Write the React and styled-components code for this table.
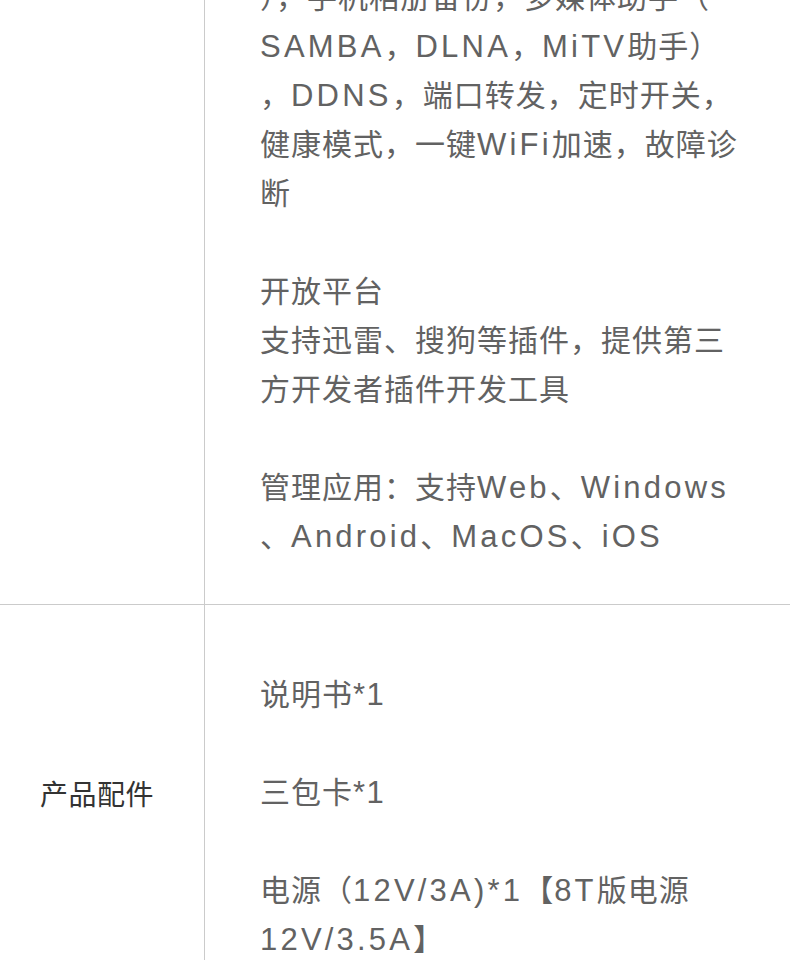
import React from "react";
import styled, { createGlobalStyle } from "styled-components";

const GlobalStyle = createGlobalStyle`
  html, body {
    margin: 0;
    padding: 0;
    background: #fff;
    overflow: hidden;
  }
  body {
    font-family: "Liberation Sans", "Noto Sans CJK SC", sans-serif;
  }
`;

//Table
const Table = styled.div`
  width: 790px;
  margin-top: -27px;
`;

const Row = styled.div`
  display: grid;
  grid-template-columns: 205px 1fr;
  border-bottom: 1px solid #cbcbcb;
`;

const Label = styled.div`
  box-sizing: border-box;
  display: flex;
  align-items: center;
  padding-left: 40px;
  border-right: 1px solid #cbcbcb;
  font-size: 28px;
  color: #333;
  letter-spacing: 0.5px;
`;

const Value = styled.div`
  padding: ${({ top }) => top}px 20px ${({ bottom }) => bottom}px 55px;
  font-size: 30px;
  line-height: 49px;
  letter-spacing: 1px;
  color: #626262;
`;

const Line = styled.div`
  white-space: nowrap;
  height: 49px;
`;

// latin runs are set wider than the cjk text around them
const Latin = styled.span`
  font-size: 31px;
  letter-spacing: ${({ tight }) => (tight ? 1.5 : 3.2)}px;
`;

const splitRuns = (text) =>
  text.split(/([A-Za-z0-9*/.()]+)/).map((part, i) =>
    i % 2 ? (
      <Latin key={i} tight={/^[0-9*]+$/.test(part)}>
        {part}
      </Latin>
    ) : (
      part
    )
  );

const Lines = ({ lines }) =>
  lines.map((text, i) => <Line key={i}>{splitRuns(text)}</Line>);

const features = [
  "），手机相册备份，多媒体助手（",
  "SAMBA，DLNA，MiTV助手）",
  "，DDNS，端口转发，定时开关，",
  "健康模式，一键WiFi加速，故障诊",
  "断",
  "",
  "开放平台",
  "支持迅雷、搜狗等插件，提供第三",
  "方开发者插件开发工具",
  "",
  "管理应用：支持Web、Windows",
  "、Android、MacOS、iOS",
];

const accessories = [
  "",
  "说明书*1",
  "",
  "三包卡*1",
  "",
  "电源（12V/3A)*1【8T版电源",
  "12V/3.5A】",
];

export default function App() {
  return (
    <>
      <GlobalStyle />
      <Table>
        <Row>
          <Label />
          <Value top={0} bottom={43}>
            <Lines lines={features} />
          </Value>
        </Row>
        <Row>
          <Label>产品配件</Label>
          <Value top={16} bottom={16}>
            <Lines lines={accessories} />
          </Value>
        </Row>
      </Table>
    </>
  );
}
